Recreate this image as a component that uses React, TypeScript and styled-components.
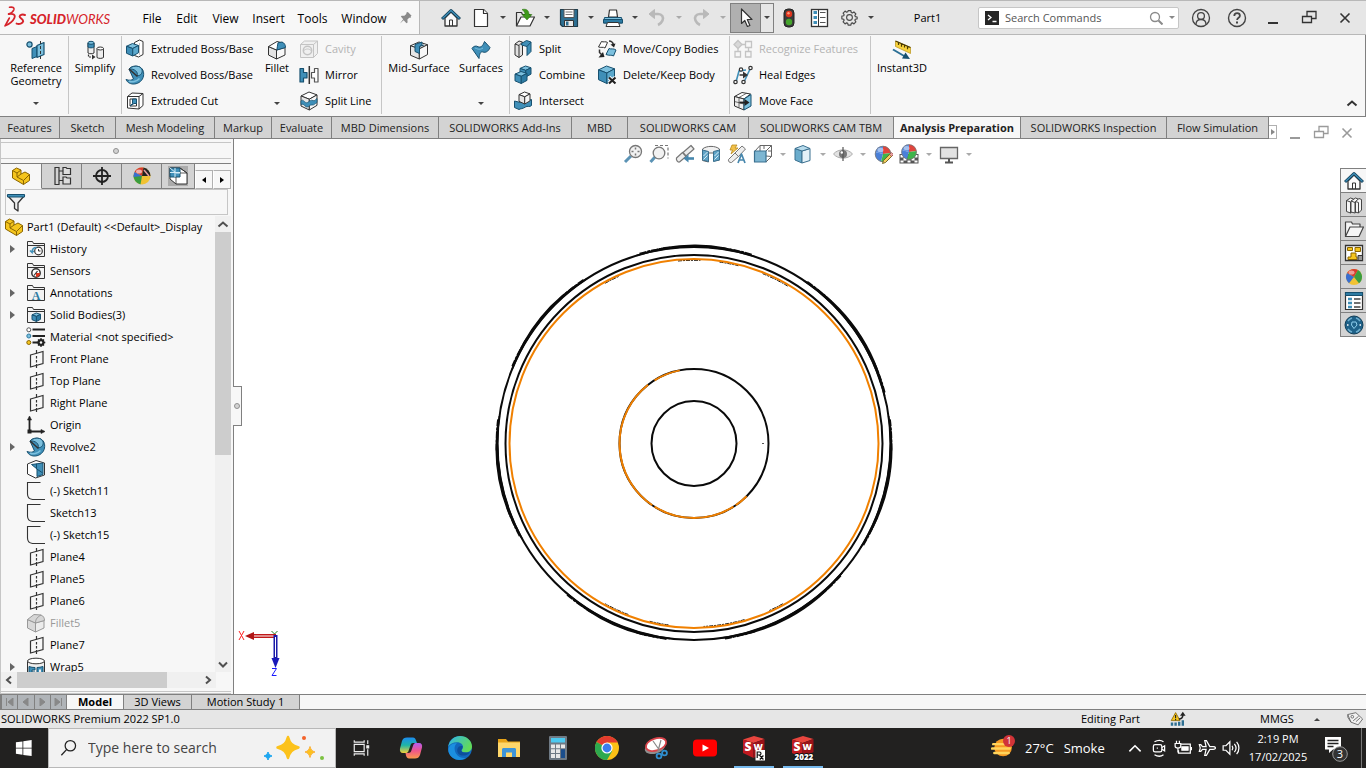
import React from "react";
import styled, { createGlobalStyle, css } from "styled-components";

const FONT = '"Open Sans", "Noto Sans", sans-serif';
const BLUE = "#3f8fb8";
const LIGHT = "#7cc0de";
const NAVY = "#17506f";
const INK = "#333333";
const GREY = "#c4c4c4";

const GlobalStyle = createGlobalStyle`
  *, *::before, *::after { box-sizing: border-box; }
  body { margin: 0; background: #f7f7f7; overflow: hidden; }
  button, input { font: inherit; color: inherit; margin: 0; }
  button { padding: 0; border: 0; background: none; cursor: default; white-space: nowrap; }
  ul { margin: 0; padding: 0; list-style: none; }
  svg { display: block; flex: none; }
`;

/* ------------------------------------------------------------------ */
/* Drawings                                                            */
/* ------------------------------------------------------------------ */

type CubeProps = {
  x: number;
  y: number;
  w: number;
  h: number;
  top?: string;
  left?: string;
  right?: string;
  line?: string;
};

const Cube = ({ x, y, w, h, top = "#fff", left = "#e6e6e6", right = "#f7f7f7", line = INK }: CubeProps) => {
  const p = (fx: number, fy: number) => `${x + w * fx},${y + h * fy}`;
  return (
    <g stroke={line} strokeWidth="1" strokeLinejoin="round">
      <polygon fill={top} points={[p(0, 0.22), p(0.5, 0), p(1, 0.16), p(0.52, 0.4)].join(" ")} />
      <polygon fill={left} points={[p(0, 0.22), p(0.52, 0.4), p(0.52, 1), p(0, 0.78)].join(" ")} />
      <polygon fill={right} points={[p(0.52, 0.4), p(1, 0.16), p(1, 0.74), p(0.52, 1)].join(" ")} />
    </g>
  );
};

const Ball = () => (
  <g>
    <path d="M10 10V2a8 8 0 0 0-7.700 6z" fill="#5b8ee0" />
    <path d="M10 10 2.300 8A8 8 0 0 0 8 17.700z" fill="#4a80d8" />
    <path d="M10 10V2a8 8 0 0 1 8 7z" fill="#e0443c" />
    <path d="M10 10l8-1a8 8 0 0 1-10 8.700z" fill="#3db54a" />
    <circle cx="10" cy="10" r="7.800" fill="none" stroke="#777" strokeWidth=".8" />
    <ellipse cx="7.500" cy="6" rx="3" ry="2.200" fill="#fff" opacity=".45" />
  </g>
);

const Folder = ({ children }: { children?: React.ReactNode }) => (
  <g>
    <path d="M1.500 17.500V2.500h5l1 2h11v13z" fill="#f2f2f2" stroke={INK} />
    <path d="M1.500 6.500h17" stroke={INK} />
    {children}
  </g>
);

const Revolve = () => (
  <g strokeLinejoin="round">
    <path
      d="M4 4C6 1.500 10 .500 13.500 1.500c4 1.200 5.800 5 5 9.500-.8 4.500-4.500 7.500-9 8-3.500.3-7-1-8.500-4.500 3 1.200 6 .8 7.500-.5z"
      fill={BLUE}
      stroke={NAVY}
    />
    <path d="M4 4c2-2.500 6.500-3.500 9.500-2.500 3.500 1.200 4.500 4.500 3 7-1 1.800-3 2.500-4.500 2C13.500 7 9.500 3.500 4 4z" fill={LIGHT} stroke={NAVY} />
    <path d="M4 4l8.500 7.500" stroke={INK} strokeWidth="1.600" />
    <path d="M4 16c3 1.500 7.500.8 10.500-2.500" stroke={LIGHT} fill="none" strokeWidth="1.500" />
  </g>
);

const art: Record<string, React.ReactNode> = {
  ds: (
    <g fill="none" stroke="#d6232a" strokeLinecap="round" strokeLinejoin="round">
      <path d="M5 1.200c3-.6 4.600.4 4 2.200-.6 1.600-2.500 3-4.800 3.900" strokeWidth="1.400" />
      <path d="M4.200 7.300c4.300-.8 6.600.7 5.200 3.700C8 14 4.800 16.400 1 18l3.800-7" strokeWidth="1.600" />
      <path d="M19 8.200c-1.900-.8-4.700-.3-4.800 1.300-.1 1.500 3.500 2.400 3.200 4.500-.3 1.900-3.400 2.700-5.900 2" strokeWidth="1.800" />
    </g>
  ),
  pin: (
    <path d="M9.500 1l4 4-1 .5.500 1.500-2 .2-2 2 .2 3-1.200.8-3-3L1 13.500l3.500-4.700L2 6l.8-1 3 .2 2-2 .2-1.700z" fill="#8a8a8a" />
  ),
  home: (
    <g strokeLinejoin="round">
      <path d="M4 10v8h12v-8l-6-6z" fill="#fafafa" stroke={INK} strokeWidth="1.300" />
      <path d="M8.500 18v-6h3v6" fill="none" stroke={INK} />
      <path d="M1 11L10 2.500 19 11" fill="none" stroke="#123f58" strokeWidth="3" />
      <path d="M1.500 10.500L10 2.500l8.500 8" fill="none" stroke={BLUE} strokeWidth="1.200" />
    </g>
  ),
  page: (
    <g fill="#fff" stroke={INK} strokeWidth="1.200" strokeLinejoin="round">
      <path d="M3.500 1.500h9l4 4v13h-13z" />
      <path d="M12.500 1.500v4h4" />
    </g>
  ),
  open: (
    <g strokeLinejoin="round">
      <path d="M1.500 18V4.500h5l1 2h7.500V9" fill="#e8e8e8" stroke={INK} strokeWidth="1.200" />
      <path d="M1.500 18L6 9h13.500L15 18z" fill="#fff" stroke={INK} strokeWidth="1.200" />
      <path d="M7 1.500c4-1 7 .5 7 5h3l-5 5.500-5-5.500h3c0-2-1-3.500-3-5z" fill="#3f9a1c" stroke="#2a6e10" strokeWidth=".5" />
    </g>
  ),
  save: (
    <g strokeLinejoin="round">
      <path d="M1.500 1.500h17v17h-15l-2-2z" fill="#2d6f92" stroke="#1f3d4c" strokeWidth="1.200" />
      <path d="M5 1.500h10v8H5z" fill="#fff" stroke="#555" />
      <path d="M6.500 4h7M6.500 6.500h7" stroke="#777" />
      <path d="M5.500 12.500h9v6h-9z" fill="#e9e9e9" stroke="#333" />
      <path d="M7 13.500h2.500v4H7z" fill="#2d6f92" />
    </g>
  ),
  print: (
    <g strokeLinejoin="round">
      <path d="M5.500 9l1-7h7l1 7z" fill="#fff" stroke={INK} strokeWidth="1.200" />
      <path d="M1.500 9.500h17l1 5.500H.5z" fill={LIGHT} stroke={NAVY} />
      <path d="M.5 11.500h19v3.500H.500z" fill="#2d7ba3" stroke={NAVY} />
      <path d="M4.500 14.500h11l1.500 4H3z" fill="#fff" stroke={INK} />
    </g>
  ),
  undo: (
    <g fill="none" stroke="#b9b9b9">
      <path d="M5 6h6c4 0 6 3 4.500 6.500-.8 2-2.500 3.500-4.500 4.500" strokeWidth="2.600" />
      <path d="M7.500 1.500L2 6l5.500 4.500z" fill="#b9b9b9" strokeWidth="1" />
    </g>
  ),
  redo: (
    <g fill="none" stroke="#b9b9b9">
      <path d="M15 6H9C5 6 3 9 4.500 12.500c.8 2 2.500 3.500 4.500 4.500" strokeWidth="2.600" />
      <path d="M12.500 1.500L18 6l-5.500 4.500z" fill="#b9b9b9" strokeWidth="1" />
    </g>
  ),
  cursor: <path d="M5.500 1v14.500l3.300-3 2.600 6 2.500-1-2.600-6H16z" fill="#fff" stroke="#333" strokeWidth="1.200" strokeLinejoin="round" />,
  traffic: (
    <g>
      <rect x="5" y="1" width="10" height="18" rx="4" fill="#3a3a3a" stroke="#222" />
      <circle cx="10" cy="6" r="3.200" fill="#e0361e" />
      <circle cx="10" cy="14" r="3.200" fill="#45a52c" />
      <circle cx="9.500" cy="5.200" r="1.200" fill="#ff9a80" />
    </g>
  ),
  list: (
    <g>
      <rect x="2.500" y="1.500" width="16" height="17" fill="#fff" stroke={INK} strokeWidth="1.300" />
      <path d="M9.500 1.500v17" stroke={INK} />
      <path d="M4.500 4.500h3.500M4.500 9.500h3.500M4.500 14.500h3.500" stroke={BLUE} strokeWidth="3" />
      <path d="M11 4.500h5.500M11 9.500h5.500M11 14.500h5.500" stroke="#555" />
    </g>
  ),
  gear: (
    <g fill="none" stroke="#4a4a4a">
      <path
        d="M8.400 2h3.200l.5 2.200 1.200.5 1.900-1.200 2.300 2.300-1.200 1.900.5 1.200 2.200.5v1.200l0 1-2.200.500-.5 1.200 1.200 1.900-2.300 2.300-1.900-1.200-1.200.5-.5 2.200H8.400l-.5-2.200-1.200-.5-1.900 1.200-2.300-2.300 1.200-1.900-.5-1.200L1 11.600V8.400l2.200-.5.5-1.200-1.200-1.900 2.300-2.300 1.900 1.200 1.200-.5z"
        strokeWidth="1.400"
        strokeLinejoin="round"
      />
      <circle cx="10" cy="10" r="3.400" strokeWidth="1.300" />
    </g>
  ),
  prompt: (
    <g>
      <rect width="14" height="14" fill="#262626" />
      <path d="M3 4l3 2.500L3 9M7.500 10.500h4" fill="none" stroke="#fff" strokeWidth="1.300" />
    </g>
  ),
  lens: (
    <g fill="none" stroke="#8a8a8a" strokeWidth="1.300">
      <circle cx="6" cy="6" r="4.500" />
      <path d="M9.500 9.500l4 4" strokeWidth="2" />
    </g>
  ),
  user: (
    <g fill="none" stroke="#444" strokeWidth="1.300">
      <circle cx="10" cy="10" r="8.500" />
      <circle cx="10" cy="8" r="3.400" />
      <path d="M5 16.500c0-3 2-5 5-5s5 2 5 5" />
    </g>
  ),
  help: (
    <g fill="none" stroke="#444">
      <circle cx="10" cy="10" r="8.500" strokeWidth="1.400" />
      <path d="M7.300 8c0-1.800 1.200-2.800 2.800-2.800s2.800 1 2.800 2.500c0 2-2.800 2.200-2.800 4.300" strokeWidth="1.800" />
      <path d="M10 13.500v2" strokeWidth="2" />
    </g>
  ),
  min: <path d="M3 13h10" stroke="currentColor" strokeWidth="2" />,
  restore: (
    <g fill="none" stroke="currentColor" strokeWidth="1.300">
      <path d="M1.500 6.500h9v6h-9z" />
      <path d="M6 6.500v-5h9v7h-4.500" />
    </g>
  ),
  close: <path d="M3.500 3.500l9 9M12.500 3.500l-9 9" stroke="currentColor" strokeWidth="1.600" />,
  chevronUp: <path d="M3.500 10.500L8 6.500l4.500 4" fill="none" stroke="currentColor" strokeWidth="2" />,
  chevronDown: <path d="M4 6.500l4 4 4-4" fill="none" stroke="currentColor" strokeWidth="2" />,
  chevronLeft: <path d="M10 4.500L6 8l4 3.500" fill="none" stroke="currentColor" strokeWidth="2" />,
  chevronRight: <path d="M6 4.500L10 8l-4 3.500" fill="none" stroke="currentColor" strokeWidth="2" />,

  refgeo: (
    <g strokeLinejoin="round">
      <circle cx="3.500" cy="4.500" r="2.600" fill={LIGHT} stroke={NAVY} strokeWidth="1.200" />
      <path d="M6 8.500l5-2v10l-5 2z" fill={BLUE} stroke={NAVY} />
      <path d="M11 5.500L18 2.500v12l-7 3z" fill={LIGHT} stroke={NAVY} strokeWidth="1.200" />
      <path d="M14.500 1v18" stroke={INK} strokeDasharray="3 2" />
    </g>
  ),
  simplify: (
    <g>
      <path d="M3 3v10c1.500 1 4.500 1 6 0V3" fill="#eee" stroke={INK} />
      <path d="M3 3v4c1.500 1.200 4.500 1.200 6 0V3z" fill={BLUE} stroke={NAVY} />
      <ellipse cx="6" cy="2.800" rx="3" ry="1.500" fill={LIGHT} stroke={NAVY} />
      <path d="M12 8.500v9c1.500 1.200 5 1.200 6.500 0v-9z" fill="#eee" stroke={INK} />
      <ellipse cx="15.250" cy="8.500" rx="3.250" ry="1.500" fill="#fff" stroke={INK} />
      <path d="M3.500 14.500v2.500h3" fill="none" stroke={INK} strokeWidth="1.200" strokeDasharray="2 1" />
      <path d="M7 14.500l3.500 2.500L7 19.500z" fill={INK} />
    </g>
  ),
  extrude: (
    <g strokeLinejoin="round">
      <path d="M9.500 3.500l5-2.500 3.500 1.500v13l-4.500 2.500-4-1.500z" fill="#fff" stroke={INK} />
      <path d="M14.500 4v12" stroke={GREY} />
      <Cube x={1.500} y={4.500} w={12} h={12.500} top={LIGHT} left={BLUE} right="#5ba8cc" line={NAVY} />
    </g>
  ),
  revolve: <Revolve />,
  cut: (
    <g strokeLinejoin="round">
      <path d="M2.500 5.500L7 2l11 .5v12L14 18 2.500 17z" fill="#fff" stroke={INK} />
      <path d="M2.500 5.500H14V18M14 5.500l4-3" fill="none" stroke={INK} />
      <path d="M5 8h6.500v7H5z" fill="#fff" stroke={INK} />
      <path d="M7.500 8h4v4.500H9L5 15l2.500-2.500z" fill={BLUE} stroke={NAVY} />
    </g>
  ),
  fillet: (
    <g strokeLinejoin="round">
      <path d="M1.500 6.500L9.500 10v9l-8-4z" fill="#e3e3e3" stroke={INK} />
      <path d="M9.500 10L18 7.500V15l-8.500 4z" fill="#f8f8f8" stroke={INK} />
      <path d="M1.500 6.500L10 1.500l6 1.500-4 3-2.500 4z" fill="#fff" stroke={INK} />
      <path d="M11 2.800L15 2c2.500 1 3.500 3 3.500 5.500L10 10c0-2 .5-4 1-7.200z" fill={BLUE} stroke={NAVY} />
    </g>
  ),
  filletOff: (
    <g strokeLinejoin="round">
      <path d="M1.500 6.500L9.500 10v9l-8-4z" fill="#d9d9d9" stroke="#999" />
      <path d="M9.500 10L18 7.500V15l-8.500 4z" fill="#ececec" stroke="#999" />
      <path d="M1.500 6.500L8 1.500 15 2c2.500 1 3.500 3 3.500 5.500L9.500 10z" fill="#d6d6d6" stroke="#999" />
      <path d="M9.500 10c0-3 1-5.500 5.500-8" fill="none" stroke="#999" />
    </g>
  ),
  cavity: (
    <g fill="none" stroke={GREY} strokeLinejoin="round">
      <path d="M1.500 5.500L5.500 2H18.500v12.500l-4 4h-13z" fill="#f0f0f0" />
      <path d="M1.500 5.500h13v13M14.500 5.500l4-3.500" />
      <circle cx="8.500" cy="11.500" r="4.200" strokeWidth="1.500" />
      <path d="M5 11.500c2-2 5-2 7 0" />
    </g>
  ),
  mirror: (
    <g strokeLinejoin="round">
      <path d="M1 3.500h3.500v4H8v5.500H4.500v4H1z" fill={BLUE} stroke={NAVY} strokeWidth="1.200" />
      <path d="M19 3.500h-3.500v4H12.500v5.500h3v4H19z" fill="#fff" stroke="#555" strokeWidth="1.200" />
      <path d="M10.300 1v18" stroke={INK} strokeWidth="1.500" />
    </g>
  ),
  splitLine: (
    <g>
      <Cube x={2} y={1} w={16} h={18} />
      <path d="M2 10c2-3 4 3 6.500 1.500S12 8.500 14 9.500s2-1 4-2v4c-2 1-3 3-5 2.500s-3 2-5 2-3-4-6-2.500z" fill={BLUE} stroke={NAVY} strokeWidth=".7" />
    </g>
  ),
  midSurface: (
    <g strokeLinejoin="round">
      <Cube x={1.500} y={2} w={17} h={17} />
      <path d="M6 4.500l7-2.500v3L10.500 6.500v7L6 11.500z" fill={BLUE} stroke={NAVY} />
      <path d="M10.500 6.500L15 5" stroke={NAVY} />
    </g>
  ),
  surfaces: (
    <g strokeLinejoin="round">
      <path d="M1 8.500c1.500-2.500 4-3 6-1.800C9.500 8 12 6 13.500 1.500l5.500 6c-1.500 4-4.500 5.500-7 4.500s-3.500 2-4 6.500z" fill={BLUE} stroke={NAVY} />
      <path d="M4 8c2 .5 4 2.500 8 0" fill="none" stroke={LIGHT} />
    </g>
  ),
  split: (
    <g strokeLinejoin="round">
      <path d="M2 5l4-3 3.500 1v13L6 18.500 2 16z" fill="#e2e2e2" stroke={INK} />
      <path d="M2 5l4 1.500v12M6 6.500L9.500 3" fill="none" stroke={INK} />
      <path d="M8.500 4.500l5-3L18 3v9.500l-4 4V7.500L8.500 6z" fill={BLUE} stroke={NAVY} />
      <path d="M14 7.500L18 3" stroke={NAVY} />
    </g>
  ),
  combine: (
    <g>
      <Cube x={7} y={1} w={11} h={11} top={LIGHT} left={BLUE} right="#2d7ba3" line={NAVY} />
      <Cube x={2} y={6.500} w={12} h={12} top={LIGHT} left={BLUE} right="#2d7ba3" line={NAVY} />
    </g>
  ),
  intersect: (
    <g strokeLinejoin="round">
      <path d="M1.500 10l6 1.500 11-3v6c-2 2-4 0-6 1.500-3 2-5 1.500-6.500 2.500l-4.500-2z" fill={BLUE} stroke={NAVY} />
      <Cube x={6} y={1} w={11} h={12} />
    </g>
  ),
  moveCopy: (
    <g strokeLinejoin="round">
      <path d="M1.500 8L4.500 2.500c2 1 4-.5 6 1L8 9c-2-1.500-4 0-6.500-1z" fill="#fff" stroke={INK} />
      <path d="M9 15.500l3-6c2 1 4.500-.5 7 1.500l-2.500 6c-2-1.500-4 0-7.500-1.500z" fill={LIGHT} stroke={NAVY} />
      <path d="M12 2c2.500 0 4 1.500 4.500 4" fill="none" stroke={INK} strokeWidth="1.500" />
      <path d="M13.500 5.500l3.500 3 1.500-4z" fill="#222" />
      <path d="M2.500 10.500v3l2 2" fill="none" stroke={INK} strokeWidth="1.500" />
      <path d="M1.500 18.500l6-.5-1.500-5z" fill="#222" />
    </g>
  ),
  deleteBody: (
    <g>
      <Cube x={1.500} y={1} w={16} h={17.500} top={LIGHT} left={BLUE} right="#5ba8cc" line={NAVY} />
      <path d="M12 12.500l6.500 6M18.500 12.500l-6.500 6" stroke="#fff" strokeWidth="4" />
      <path d="M12 12.500l6.500 6M18.500 12.500l-6.500 6" stroke="#222" strokeWidth="2.200" />
    </g>
  ),
  recognize: (
    <g fill="none" stroke={GREY} strokeWidth="1.300">
      <path d="M5 1.500L9 5.500 5 9.500 1 5.500z" fill="#d8d8d8" />
      <path d="M12.500 2.500h6v6h-6zM2 12.500h5.500V18H2zM12.500 12.500h5.500V18h-5.500z" />
      <path d="M9 5.500h3.500M5 9.500v3M15.500 8.500v4" />
    </g>
  ),
  heal: (
    <g fill="none">
      <path d="M3 17L6 6l7-1" stroke={BLUE} strokeWidth="1.600" />
      <path d="M11 17L17.500 3" stroke={BLUE} strokeWidth="1.600" />
      <path d="M6.500 10h5" stroke={INK} strokeWidth="1.500" />
      <path d="M10 6.500l5 3.500-5 3.500z" fill={INK} />
      <g fill="#fff" stroke={INK} strokeWidth="1.200">
        <circle cx="2.500" cy="17" r="1.700" />
        <circle cx="10.500" cy="17" r="1.700" />
        <circle cx="17.500" cy="3" r="1.700" />
        <circle cx="8" cy="4.500" r="1.700" />
      </g>
    </g>
  ),
  moveFace: (
    <g strokeLinejoin="round">
      <path d="M1.500 5.500L9 1.500l8.500 1.500-6.500 5z" fill="#fff" stroke={INK} />
      <path d="M1.500 5.500L11 8v11l-9.500-4z" fill="#eee" stroke={INK} />
      <path d="M6 6.500v10M1.500 10.500L11 13M6 6.500L13.500 2.300" fill="none" stroke={INK} strokeWidth=".7" />
      <path d="M11 8l7-4.500v11.500l-7 4z" fill={LIGHT} stroke={NAVY} />
      <path d="M6.500 11.500h6" stroke="#222" strokeWidth="1.800" />
      <path d="M11.500 8l5 3.500-5 3.500z" fill="#222" />
    </g>
  ),
  instant: (
    <g strokeLinejoin="round">
      <path d="M3.500 1L18.500 7.500v6L3.500 6.500z" fill="#f8d23c" stroke="#b8921a" strokeWidth=".7" />
      <path d="M3.500 1L18.500 7.500M6.500 2.500v2.500M9.500 3.700v3M12.500 5v2.500M15.500 6.300v3" stroke="#4a3a00" strokeWidth="1.200" />
      <path d="M1 9.500L13 16.500" stroke="#2b6f95" strokeWidth="2" />
      <path d="M13.500 12.500l4.500 6.500-8-.5z" fill={NAVY} />
    </g>
  ),

  part: (
    <g stroke="#8a6500" strokeLinejoin="round">
      <path d="M1.500 4.500L5.500 2l4.500 2v4l4-2 4.500 2.500v6L12.500 18.500 1.500 12z" fill="#f5c51d" />
      <path d="M1.500 4.500L6 7l4-3M6 7v4l6.500 3.500 6-6M12.500 14.500v4M6 11l4-3" fill="none" />
    </g>
  ),
  tree: (
    <g fill="none" stroke={INK} strokeWidth="1.200">
      <path d="M3 1.500h4v17H3zM7 5h4M7 14.500h4" />
      <path d="M11 3.500V1.500h3l1 1h3.500v6H11zM11 12.500v-1.500h3l1 1h3.500v6H11z" fill="#ddd" />
    </g>
  ),
  target: (
    <g fill="none" stroke="#222" strokeWidth="1.800">
      <circle cx="10" cy="10" r="6" />
      <path d="M10 1v18M1 10h18" />
    </g>
  ),
  appearance: (
    <g>
      <circle cx="10" cy="10" r="8.500" fill="#f1c232" />
      <path d="M10 10L2.500 6a8.500 8.500 0 0 1 9-4.400z" fill="#d73b2f" />
      <path d="M10 10l1.500-8.400a8.500 8.500 0 0 1 7 8.400z" fill="#222" />
      <path d="M12 4l5 6" stroke="#e8a0a0" strokeWidth="1.500" />
      <path d="M10 10L1.600 9A8.500 8.500 0 0 0 8.500 18.400z" fill="#3a9d3f" />
      <path d="M10 10L2.500 6a8.500 8.500 0 0 0-1 5z" fill="#3a6ed0" />
      <ellipse cx="7" cy="5.500" rx="3" ry="2" fill="#fff" opacity=".6" />
    </g>
  ),
  camBox: (
    <g strokeLinejoin="round">
      <rect width="20" height="20" fill="#ababab" />
      <path d="M2 2h10l7 5v11H8l-6-5z" fill="#fff" stroke={INK} />
      <path d="M2 2h10v9H2z" fill={BLUE} stroke={NAVY} />
      <path d="M7 2v9M2 6.500h10M2 2l6 5h4" fill="none" stroke="#d5ecf7" />
      <path d="M8 11v7M12 7h7M12 2l7 5" fill="none" stroke={INK} strokeWidth=".8" />
    </g>
  ),
  filter: (
    <g strokeLinejoin="round">
      <path d="M1.500 3.500h17L12 11v8l-3.500-2.500V11z" fill="#eee" stroke={INK} strokeWidth="1.300" />
      <path d="M1.500 2.500h17v2.500h-17z" fill={BLUE} stroke={NAVY} />
    </g>
  ),
  history: (
    <Folder>
      <circle cx="12.500" cy="12" r="3.800" fill="#fff" stroke={INK} strokeWidth="1.200" />
      <path d="M12.500 10v2h2" stroke={INK} fill="none" />
      <path d="M10.500 8.500c-3 0-4.500 2-4.500 5l-2-2M6 13.500l2-1.500" stroke={BLUE} fill="none" strokeWidth="1.500" />
    </Folder>
  ),
  sensors: (
    <Folder>
      <circle cx="10" cy="12" r="4.200" fill="#fff" stroke={INK} strokeWidth="1.500" />
      <path d="M10 12h4a4 4 0 0 1-4 4z" fill="#e0361e" />
      <path d="M8 14.500l3.500-4.500" stroke={INK} strokeWidth="1.200" />
    </Folder>
  ),
  annotations: (
    <Folder>
      <text x="10" y="16.500" textAnchor="middle" fontFamily="Liberation Serif" fontWeight="700" fontSize="12" fill="#2d7ba3">
        A
      </text>
    </Folder>
  ),
  bodies: (
    <Folder>
      <Cube x={6} y={8} w={8.500} h={8.500} top={LIGHT} left={BLUE} right="#2d7ba3" line={NAVY} />
    </Folder>
  ),
  material: (
    <g>
      <path d="M6.500 2.500H19M6.500 9H19M6.500 15.500h6" stroke="#222" strokeWidth="1.800" />
      <circle cx="2.800" cy="2.800" r="2" fill="#fff" stroke="#555" />
      <circle cx="2.800" cy="9" r="2" fill={LIGHT} stroke="#2d7ba3" />
      <circle cx="2.800" cy="15.500" r="2" fill="#f5c51d" stroke="#8a6500" />
      <circle cx="15" cy="15.500" r="2.400" fill="none" stroke="#222" strokeWidth="2.200" />
      <path d="M15 11v9M10.700 15.500h8.600M12 12.500l6 6M18 12.500l-6 6" stroke="#222" strokeWidth="1.300" />
      <circle cx="15" cy="15.500" r="1.200" fill="#f7f7f7" />
    </g>
  ),
  plane: (
    <g fill="none" stroke={INK} strokeWidth="1.200">
      <path d="M4.500 6L17 2.500v12L4.500 18z" />
      <path d="M10.500 1v3.500M10.500 7v2.500M10.500 11v2.500M10.500 15v4" />
    </g>
  ),
  origin: (
    <g fill="#222" stroke="#222">
      <path d="M3.500 4v12.500h12" fill="none" strokeWidth="1.800" />
      <path d="M1.500 5l2-4 2 4zM15 14.500l4 2-4 2z" strokeWidth=".6" />
      <rect x="2" y="15" width="3" height="3" />
    </g>
  ),
  shell: (
    <g strokeLinejoin="round">
      <path d="M1.500 5L10 1.500 18.500 4v12L9.500 19l-8-4z" fill="#fff" stroke={INK} />
      <path d="M5.500 5.500L17 4v11.500l-6 2V10z" fill={BLUE} stroke={NAVY} />
      <path d="M10.500 4.800v5l6 4" fill="none" stroke={NAVY} />
    </g>
  ),
  sketch: <path d="M14.500 1.500h-13v11.500c0 3.500 1.500 5 5 5.500H19" fill="none" stroke={INK} strokeWidth="1.100" />,
  wrap: (
    <g>
      <path d="M1.500 4.500V18h17V4.500" fill="#eee" stroke={INK} />
      <ellipse cx="10" cy="4" rx="8.500" ry="2.800" fill="#fff" stroke={INK} />
      <path d="M3 9.500c2 .8 4 1 6 1v2.500H6v2h3V19c-2 0-4 0-6-.5zM11 10.500c2 0 4-.4 6-1v9c-2 .5-4 .5-6 .5z" fill={BLUE} stroke={NAVY} />
      <path d="M13 12.500h2v4h-2z" fill="#eee" />
    </g>
  ),

  zoomFit: (
    <g fill="none" stroke="#777">
      <path d="M8 12l-6 6" stroke="#5b93b5" strokeWidth="3" />
      <circle cx="12.500" cy="7.500" r="6" fill="#f2f2f2" strokeWidth="1.300" />
      <path d="M12.500 3.500v2M12.500 9.500v2M8.500 7.500h2M14.500 7.500h2" strokeWidth="1.500" />
    </g>
  ),
  zoomArea: (
    <g fill="none" stroke="#777">
      <path d="M6 1.500h13v13" strokeDasharray="3 2" strokeWidth="1.200" />
      <path d="M6 13l-4.500 5" stroke="#5b93b5" strokeWidth="3" />
      <circle cx="10" cy="9" r="5.800" fill="#f2f2f2" strokeWidth="1.300" />
    </g>
  ),
  prevView: (
    <g strokeLinejoin="round">
      <path d="M1.500 14l6-5.500 3.500 4-6.500 5.500c-2 .5-3.500-2-3-4zM8 8.500l8-7 3 3.500-8 7z" fill="#eee" stroke="#777" strokeWidth="1.200" />
      <path d="M12 14.500h7" stroke="#4787ad" strokeWidth="2.600" />
      <path d="M13.500 10.500v8l-5-4z" fill="#4787ad" />
    </g>
  ),
  section: (
    <g strokeLinejoin="round">
      <path d="M1.500 5c4-3.500 13-3.500 17 0v11l-6 1V9h-5v9l-6-1.500z" fill="#f0f0f0" stroke="#666" />
      <path d="M1.500 6l6 1.500v10l-6-1.500zM12.500 7.500l6-1.500v10l-6 1.500z" fill="#5fa3c6" stroke="#3b708f" />
      <path d="M2.500 12l4-4M2.500 15.500l4-4M13.500 12l4-4M13.500 15.500l4-4" stroke="#d8edf7" />
    </g>
  ),
  dynamic: (
    <g strokeLinejoin="round">
      <path d="M1.500 15.500L8 9l3.500 3.500-7 6c-2 .3-3.500-1-3-3zM8 9l7-7 3.500 3-7 7.500z" fill="#eee" stroke="#777" />
      <path d="M5 1h5L8 4h3l-7 6 1.500-4H3z" fill="#f2c14a" stroke="#b98a1c" strokeWidth=".8" />
      <path d="M11 19l3.500-9 3.500 9M12.500 16h4" fill="none" stroke="#4787ad" strokeWidth="1.700" />
    </g>
  ),
  viewOrient: (
    <g strokeLinejoin="round" stroke="#666">
      <path d="M2 7L7 1.500h11.500v11L13 18z" fill="#fff" />
      <path d="M13 7l5.500-5.500M7 1.500V7M11 1.500V5M18.500 7H15M18.500 12.500L13 12" fill="none" />
      <path d="M1.500 7H13v11H1.500z" fill="#7db6d2" stroke="#3b708f" strokeWidth="1.200" />
    </g>
  ),
  displayStyle: (
    <g strokeLinejoin="round" stroke="#3b708f">
      <path d="M2 4.500L9 7v12l-7-3z" fill="#6aaccc" />
      <path d="M9 7l8-2.500v12L9 19z" fill="#e4f2f9" />
      <path d="M2 4.500L10 1.500l7 3L9 7z" fill="#b7dbec" />
    </g>
  ),
  eye: (
    <g>
      <path d="M.5 10C5 4.500 15 4.500 19.500 10 15 15.500 5 15.500.500 10z" fill="#e2e2e2" stroke="#aaa" />
      <circle cx="10" cy="10" r="4" fill="#777" />
      <path d="M10 3v14" stroke="#555" strokeWidth="1.200" />
      <circle cx="8.800" cy="8.500" r="1.200" fill="#fff" />
    </g>
  ),
  ballEdit: (
    <g>
      <Ball />
      <path d="M17.500 9.500l2 2-7 7-3 1 1-3z" fill="#f3cf5e" stroke="#6b5a20" strokeWidth=".9" />
      <path d="M16.500 10.500l2-2 2 2-2 2z" fill="#e9a0a0" stroke="#8a4040" strokeWidth=".6" />
    </g>
  ),
  scene: (
    <g>
      <path d="M.5 10h19v9.500H.500z" fill="#555" />
      <path d="M1.500 11h3v2.500h-3zM15.500 11h3v2.500h-3zM4.500 14h3v2.500h-3zM12.500 14h3v2.500h-3zM1.500 16.500h3v2h-3zM8.500 16.500h3v2h-3zM15.500 16.500h3v2h-3z" fill="#fff" />
      <g transform="translate(.5 -1.500) scale(.95)">
        <Ball />
      </g>
    </g>
  ),
  monitor: (
    <g>
      <path d="M1.500 3.500h17v11h-17z" fill="#e2e2e2" stroke="#666" strokeWidth="1.300" />
      <path d="M10 15v2.500M6 18.500h8" stroke="#555" strokeWidth="2" />
    </g>
  ),

  library: (
    <g fill="#f5f5f5" stroke="#444" strokeLinejoin="round">
      <path d="M2.500 5.500l4-2.500 3 1v11.500l-3 2.500-4-1.500z" />
      <path d="M7 6l4.500-3 2.500 1v11.500l-3 2.500-4-1z" />
      <path d="M11.500 6.500L15 3.500l2.500 1V15l-3 3-3-1z" />
      <path d="M2.500 5.500l4 1.500v11M7 6l4 1.500V18M11.500 6.500l3 1V18" fill="none" />
    </g>
  ),
  folderOpen: (
    <g fill="#f5f5f5" stroke="#444" strokeWidth="1.200" strokeLinejoin="round">
      <path d="M1.500 17.500V3h6l1 2h7.500v3" />
      <path d="M1.500 17.500L6 8h13.500l-4.500 9.500z" />
    </g>
  ),
  palette: (
    <g>
      <path d="M1.500 2.500h17v15h-17z" fill="#fff" stroke={INK} strokeWidth="1.300" />
      <path d="M3.500 4.500h5v3h-5zM11 4.500h5.500v4H11zM4 14h3v-4h5v4h1v2.500H4z" fill="#f5c51d" stroke="#8a6500" />
      <path d="M14 12.500h4.500v5H14z" fill="#999" stroke={INK} />
    </g>
  ),
  ball: (
    <g>
      <circle cx="10" cy="10" r="8" fill="#f1c232" />
      <path d="M10 10L3 6a8 8 0 0 1 11-3z" fill="#d73b2f" />
      <path d="M10 10l4-7a8 8 0 0 1 1 13.200z" fill="#3a9d3f" />
      <path d="M10 10L3 6a8 8 0 0 0 2 10.200z" fill="#3a6ed0" />
      <ellipse cx="7.500" cy="5.500" rx="3" ry="2" fill="#fff" opacity=".5" />
    </g>
  ),
  props: (
    <g>
      <path d="M1.500 1.500h17v17h-17z" fill="#fff" stroke={INK} strokeWidth="1.200" />
      <path d="M1.500 1.500h17v3h-17z" fill="#2d7ba3" stroke={NAVY} />
      <path d="M4 8h4M4 12h4M4 16h4" stroke={BLUE} strokeWidth="2.400" />
      <path d="M10 8h6.500M10 12h6.500M10 16h6.500" stroke="#444" strokeWidth="1.300" />
    </g>
  ),
  globe: (
    <g>
      <circle cx="10" cy="10" r="9" fill="#1e6188" stroke="#123f58" />
      <path d="M4 6a7 7 0 0 1 4-3M12 3a7 7 0 0 1 4 3M4 14a7 7 0 0 0 4 3M12 17a7 7 0 0 0 4-3" fill="none" stroke="#6fb0d0" strokeWidth="1.500" />
      <path d="M8 7h4l1 3-3 3.500L7.500 10z" fill="none" stroke="#8fd0ee" />
      <path d="M3 10h1.500M15.500 10H17" stroke="#fff" strokeWidth="1.500" />
    </g>
  ),

  rebuild: (
    <g>
      <path d="M7 2l5.500 10H1.500z" fill="#f5c51d" stroke="#8a6500" strokeLinejoin="round" />
      <path d="M7 5v4M7 10v1.500" stroke="#222" strokeWidth="1.400" />
      <path d="M11 10c4 0 5-2 5-5" fill="none" stroke="#222" strokeWidth="2" />
      <path d="M12.500 6L16 1l3.500 5z" fill="#222" />
      <path d="M1 14.500h3v4H1zM5.500 14.500h3v4h-3zM10 13.500h3v5h-3zM14.500 11.500h3v7h-3z" fill="#2d6f92" />
    </g>
  ),
  tags: (
    <g fill="#f2f2f2" stroke="#666" strokeLinejoin="round">
      <path d="M2 5l9-2 7.500 7-5 6.500-8-3z" />
      <path d="M2 5v3l3.500 5.500" fill="none" />
      <circle cx="7" cy="7.500" r="1.500" />
      <path d="M8 12l6-5M11 13l4.500-4" />
    </g>
  ),

  windows: <path d="M1 3.700l7.300-1v7H1zM9.200 2.500L18.500 1v8.700H9.200zM1 10.500h7.300v7l-7.300-1zM9.200 10.500h9.300V19l-9.300-1.300z" fill="#fff" />,
  search: (
    <g fill="none" stroke="#222" strokeWidth="1.400">
      <circle cx="11.500" cy="7.500" r="5.800" />
      <path d="M7.500 11.500L1.500 18" />
    </g>
  ),
  taskview: (
    <g fill="none" stroke="#eee" strokeWidth="1.300">
      <path d="M2.500 6h11v8h-11zM2.500 1.500v2h11v-2M2.500 18.500v-2h11v2M17.500 1.500v4M17.500 11.500v7" />
      <path d="M16.500 7.500h2v2.500h-2z" fill="#eee" />
    </g>
  ),
  weather: (
    <g fill="none" strokeLinecap="round">
      <circle cx="11" cy="9.500" r="8" fill="#f59a23" />
      <path d="M2 6.500h14M1 10.500h16M3 14.500h13" stroke="#ffd45c" strokeWidth="2.200" />
    </g>
  ),
  trayUp: <path d="M3 11l5-5 5 5" fill="none" stroke="#fff" strokeWidth="1.400" />,
  meet: (
    <g fill="none" stroke="#fff" strokeWidth="1.100">
      <rect x="3" y="5" width="7.500" height="6.500" rx="1.500" />
      <path d="M10.500 7.500L13 6v4.500l-2.500-1.500M4 2.500c2.500-1.500 6-1.500 8 0M4 14c2.500 1.500 6 1.500 8 0" />
      <path d="M6 8.200h1" />
    </g>
  ),
  battery: (
    <g fill="none" stroke="#fff" strokeWidth="1.100">
      <path d="M6 4.500h8.500v8H4V10" />
      <path d="M15.500 7v3" strokeWidth="1.600" />
      <path d="M7 7h5.500v3H7z" fill="#fff" />
      <path d="M1 4h5v2.500c0 1-1 1.500-2.500 1.500S1 7.500 1 6.500zM2.200 4V1.500M4.800 4V1.500M3.500 8v4" fill="#222" />
    </g>
  ),
  plane2: (
    <path d="M15.500 8c0 1-1 1.200-2 1.200h-3L7.500 14.500H6l1.200-5.300H4L2.500 11H1.200L2 8l-.8-3h1.300L4 6.800h3.200L6 1.500h1.500l3 5.300h3c1 0 2 .2 2 1.200z" fill="none" stroke="#fff" strokeWidth="1.100" />
  ),
  volume: (
    <g fill="none" stroke="#fff" strokeWidth="1.100">
      <path d="M1 6h2.500L7 2.500v11L3.500 10H1z" />
      <path d="M9 6c.8 1.200.8 2.800 0 4M11 4.300c1.800 2.200 1.800 5.200 0 7.400M13 2.500c2.700 3.200 2.700 7.800 0 11" />
    </g>
  ),
};

const Glyph = ({ name, size = 20, box }: { name: string; size?: number; box?: number }) => (
  <svg width={size} height={size} viewBox={`0 0 ${box ?? 20} ${box ?? 20}`} aria-hidden="true">
    {art[name]}
  </svg>
);

const Caret = ({ color = "#444", up = false }: { color?: string; up?: boolean }) => (
  <svg width="6" height="3" viewBox="0 0 6 3" aria-hidden="true">
    <path d={up ? "M0 3h6L3 0z" : "M0 0h6L3 3z"} fill={color} />
  </svg>
);

/* ------------------------------------------------------------------ */
/* Window frame and title bar                                          */
/* ------------------------------------------------------------------ */

const Window = styled.div`
  display: flex;
  flex-direction: column;
  height: 100vh;
  font-family: ${FONT};
  font-size: 11px;
  line-height: 14px;
  color: #000;
  background: #f7f7f7;
`;

const TitleBar = styled.header`
  display: flex;
  height: 35px;
  flex: none;
  border-top: 1px solid #b8b8b8;
  border-bottom: 1px solid #b8b8b8;
  background: #e6e6e6;
`;

const MenuBar = styled.nav`
  display: flex;
  align-items: center;
  width: 420px;
  flex: none;
  padding-left: 4px;
  background: #f7f7f7;
  border-right: 1px solid #b8b8b8;
`;

const Brand = styled.div`
  display: flex;
  align-items: center;
  gap: 4px;
  width: 130px;
  padding-bottom: 2px;
`;

const Wordmark = styled.span`
  padding-top: 4px;
  font: italic 400 13px/16px Lato, sans-serif;
  color: #d6232a;
  b {
    font-weight: 900;
  }
`;

const MenuItem = styled.button<{ $w: number }>`
  width: ${(p) => p.$w}px;
  flex: none;
  height: 24px;
  padding-top: 2px;
  text-align: center;
  font-size: 12px;
`;

const QuickBar = styled.div`
  display: flex;
  align-items: center;
  padding-left: 16px;
`;

const IconButton = styled.button<{ $w?: number; $h?: number; $tone?: string }>`
  display: flex;
  align-items: center;
  justify-content: center;
  width: ${(p) => p.$w ?? 30}px;
  height: ${(p) => p.$h ?? 30}px;
  flex: none;
  color: ${(p) => p.$tone ?? "#333"};
`;

const SelectTool = styled.div`
  display: flex;
  border: 1px solid #808080;
  background: #e6e6e6;
  height: 30px;
  width: 44px;
  & > button:first-child {
    background: #b0b0b0;
    border-right: 1px solid #808080;
  }
`;

const DocTitle = styled.div`
  flex: 1;
  align-self: center;
  text-align: center;
`;

const WindowTools = styled.div`
  display: flex;
  align-items: center;
  padding-right: 3px;
`;

const CommandSearch = styled.label`
  display: flex;
  align-items: center;
  width: 201px;
  height: 22px;
  margin-right: 4px;
  padding: 0 3px 0 6px;
  gap: 6px;
  background: #fff;
  border: 1px solid #c6c6c6;
  border-radius: 2px;
  color: #555;
`;

const PlainInput = styled.input`
  flex: 1;
  min-width: 0;
  border: 0;
  outline: 0;
  padding: 0;
  background: transparent;
  &::placeholder {
    color: inherit;
    opacity: 1;
  }
`;

/* ------------------------------------------------------------------ */
/* Ribbon                                                              */
/* ------------------------------------------------------------------ */

const Ribbon = styled.section`
  display: flex;
  height: 81px;
  flex: none;
  padding: 1px 0 2px;
  border-right: 1px solid #808080;
`;

const RibbonGroup = styled.div<{ $w?: number }>`
  display: flex;
  flex: none;
  width: ${(p) => (p.$w ? `${p.$w}px` : "auto")};
  border-right: 1px solid #c6c6c6;
`;

const BigTool = styled.button<{ $w: number }>`
  display: flex;
  flex-direction: column;
  align-items: center;
  width: ${(p) => p.$w}px;
  flex: none;
  padding: 4px 0 9px;
  line-height: 13px;
  span {
    margin-top: 1px;
    white-space: pre-line;
  }
  svg:last-child:not(:first-child) {
    margin-top: auto;
  }
`;

const ToolColumn = styled.div<{ $w: number }>`
  display: flex;
  flex-direction: column;
  width: ${(p) => p.$w}px;
  flex: none;
  padding-left: 3px;
`;

const ToolRow = styled.button<{ $off?: boolean }>`
  display: flex;
  align-items: center;
  gap: 6px;
  height: 26px;
  text-align: left;
  color: ${(p) => (p.$off ? "#b4b4b4" : "#000")};
`;

const RibbonEnd = styled.div`
  display: flex;
  flex: 1;
  justify-content: flex-end;
  align-items: flex-end;
  padding: 0 4px 2px 0;
`;

/* ------------------------------------------------------------------ */
/* Command tabs                                                        */
/* ------------------------------------------------------------------ */

const TabStrip = styled.nav`
  display: flex;
  height: 23px;
  flex: none;
  border-top: 1px solid #808080;
`;

const Tab = styled.button<{ $w: number; $on?: boolean }>`
  width: ${(p) => p.$w}px;
  flex: none;
  color: #222;
  background: #d3d3d3;
  border-right: 1px solid #808080;
  border-bottom: 1px solid #808080;
  ${(p) =>
    p.$on &&
    css`
      font-weight: 700;
      background: #f7f7f7;
    `}
`;

const TabStripEnd = styled.div`
  display: flex;
  flex: 1;
  align-items: flex-end;
  justify-content: space-between;
  padding-right: 3px;
  background: #fff;
`;

const ScrollMark = styled.button`
  width: 8px;
  height: 14px;
  border: 1px solid #b0b0b0;
  border-left: 0;
  display: flex;
  align-items: center;
  justify-content: center;
`;

/* ------------------------------------------------------------------ */
/* Feature manager                                                     */
/* ------------------------------------------------------------------ */

const Work = styled.main`
  display: flex;
  flex: 1;
  min-height: 0;
`;

const Side = styled.aside`
  display: flex;
  flex-direction: column;
  width: 234px;
  flex: none;
  border-right: 1px solid #808080;
  border-left: 1px solid #c6c6c6;
`;

const Grip = styled.div`
  display: flex;
  align-items: center;
  justify-content: center;
  height: 17px;
  margin: 3px 2px 4px 0;
  border-top: 1px solid #c6c6c6;
  border-bottom: 1px solid #c6c6c6;
`;

const GripDot = styled.i`
  width: 6px;
  height: 6px;
  border-radius: 50%;
  background: #d3d3d3;
  border: 1px solid #909090;
`;

const SideTabs = styled.div`
  display: flex;
  height: 26px;
  flex: none;
  margin-right: 2px;
  border-top: 1px solid #808080;
`;

const SideTab = styled.button<{ $on?: boolean; $w?: number }>`
  display: flex;
  align-items: center;
  justify-content: center;
  width: ${(p) => p.$w ?? 40}px;
  flex: none;
  overflow: hidden;
  background: ${(p) => (p.$on ? "#f7f7f7" : "#d3d3d3")};
  border-right: 1px solid #808080;
  border-bottom: 1px solid ${(p) => (p.$on ? "#f7f7f7" : "#808080")};
`;

const SideScroll = styled.button`
  flex: 1;
  align-self: flex-end;
  height: 19px;
  display: flex;
  align-items: center;
  justify-content: center;
  background: #f7f7f7;
  border: 1px solid #b0b0b0;
  border-left-color: #fff;
`;

const FilterBox = styled.label`
  display: flex;
  align-items: center;
  height: 26px;
  flex: none;
  margin: 0 5px 0 4px;
  border: 1px solid #c6c6c6;
`;

const TreeArea = styled.div`
  display: flex;
  flex: 1;
  min-height: 0;
  padding: 1px 2px 0 0;
`;

const Tree = styled.ul`
  flex: 1;
  min-width: 0;
  overflow: hidden;
`;

const Node = styled.li<{ $root?: boolean; $off?: boolean }>`
  display: flex;
  align-items: center;
  height: 22px;
  padding-left: ${(p) => (p.$root ? 3 : 9)}px;
  gap: ${(p) => (p.$root ? 3 : 4)}px;
  white-space: nowrap;
  color: ${(p) => (p.$off ? "#999" : "#000")};
`;

const Twist = styled.span`
  width: 12px;
  flex: none;
`;

const ScrollTrack = styled.div<{ $row?: boolean }>`
  display: flex;
  flex-direction: ${(p) => (p.$row ? "row" : "column")};
  flex: none;
  background: #f0f0f0;
  ${(p) =>
    p.$row
      ? css`
          height: 16px;
          width: 215px;
        `
      : css`
          width: 16px;
        `}
`;

const Thumb = styled.div<{ $flex: number }>`
  flex: ${(p) => p.$flex} 1 0;
  background: #cdcdcd;
`;

const Slack = styled.div<{ $flex: number }>`
  flex: ${(p) => p.$flex} 1 0;
`;

const SideFoot = styled.div`
  height: 3px;
  flex: none;
  margin: 3px 2px 0 0;
  border-top: 1px solid #c6c6c6;
  border-bottom: 1px solid #c6c6c6;
`;

/* ------------------------------------------------------------------ */
/* Graphics area                                                       */
/* ------------------------------------------------------------------ */

const Viewport = styled.section`
  position: relative;
  flex: 1;
  min-width: 0;
  background: #fff;
  border-top: 1px solid transparent;
`;

const Canvas = styled.svg`
  position: absolute;
  inset: 0;
  width: 100%;
  height: 100%;
`;

const ViewTools = styled.div`
  position: relative;
  display: flex;
  justify-content: center;
  padding-right: 5px;
  padding-top: 4px;
`;

const PanelHandle = styled.button`
  position: absolute;
  left: -1px;
  top: 246px;
  display: flex;
  align-items: center;
  justify-content: center;
  width: 9px;
  height: 40px;
  background: #f7f7f7;
  border: 1px solid #808080;
  border-left: 0;
`;

const TaskPane = styled.nav`
  position: absolute;
  right: 0;
  top: 28px;
  display: flex;
  flex-direction: column;
  width: 26px;
  border: 1px solid #808080;
  border-width: 1px 0 0 1px;
`;

const PaneTab = styled.button<{ $on?: boolean }>`
  display: flex;
  align-items: center;
  justify-content: center;
  height: 24px;
  background: ${(p) => (p.$on ? "#f7f7f7" : "#d3d3d3")};
  border-bottom: 1px solid #808080;
`;

/* ------------------------------------------------------------------ */
/* Model tabs and status bar                                           */
/* ------------------------------------------------------------------ */

const ModelTabs = styled.nav`
  display: flex;
  height: 16px;
  flex: none;
  border-top: 1px solid #808080;
  border-bottom: 1px solid #808080;
  background: #f7f7f7;
`;

const Pager = styled.div`
  display: flex;
  gap: 1px;
  width: 67px;
  padding: 0 1px 0 2px;
  background: #808080;
`;

const PagerButton = styled.button`
  flex: 1;
  display: flex;
  align-items: center;
  justify-content: center;
  background: #b0b4b8;
`;

const ModelTab = styled.button<{ $w: number; $on?: boolean }>`
  width: ${(p) => p.$w}px;
  flex: none;
  font-weight: ${(p) => (p.$on ? 700 : 400)};
  background: ${(p) => (p.$on ? "#f7f7f7" : "#d3d3d3")};
  border-right: 1px solid #808080;
`;

const StatusBar = styled.footer`
  display: flex;
  align-items: center;
  height: 18px;
  flex: none;
  padding: 0 2px 0 1px;
  background: #e6e6e6;
`;

const StatusCell = styled.span<{ $w?: number; $push?: boolean }>`
  display: flex;
  align-items: center;
  width: ${(p) => (p.$w ? `${p.$w}px` : "auto")};
  margin-left: ${(p) => (p.$push ? "auto" : 0)};
`;

/* ------------------------------------------------------------------ */
/* Desktop task bar                                                    */
/* ------------------------------------------------------------------ */

const TaskBar = styled.footer`
  display: flex;
  height: 40px;
  flex: none;
  background: #222120;
  color: #fff;
`;

const TaskSearch = styled.label`
  display: flex;
  align-items: center;
  width: 288px;
  padding: 0 8px 0 11px;
  gap: 10px;
  background: #f2f2f2;
  border: 1px solid #b8b8b8;
  color: #444;
  font-size: 14px;
  line-height: 20px;
`;

const TaskButton = styled.button<{ $w?: number; $live?: boolean }>`
  display: flex;
  align-items: center;
  justify-content: center;
  width: ${(p) => p.$w ?? 49}px;
  flex: none;
  ${(p) =>
    p.$live &&
    css`
      background: linear-gradient(#76b9ed, #76b9ed) center bottom / 40px 2px no-repeat;
    `}
`;

const Tray = styled.div`
  display: flex;
  align-items: center;
  margin-left: auto;
`;

const Weather = styled.button`
  display: flex;
  align-items: center;
  gap: 10px;
  width: 132px;
  font-size: 13px;
`;

const WeatherIcon = styled.span`
  position: relative;
  width: 24px;
`;

const Badge = styled.span`
  position: absolute;
  right: 0;
  top: -2px;
  width: 12px;
  height: 12px;
  border-radius: 50%;
  background: #d13438;
  font-size: 9px;
  line-height: 12px;
`;

const Clock = styled.div`
  width: 70px;
  text-align: center;
  font-size: 11px;
  line-height: 18px;
`;

const ShowDesktop = styled.button`
  width: 5px;
  height: 40px;
  border-left: 1px solid #777;
`;

/* ------------------------------------------------------------------ */
/* Content                                                             */
/* ------------------------------------------------------------------ */

const menus: [string, number][] = [
  ["File", 36],
  ["Edit", 34],
  ["View", 43],
  ["Insert", 43],
  ["Tools", 45],
  ["Window", 58],
];

const quick = ["page", "open", "save", "print", "undo", "redo"];

const tabs: [string, number][] = [
  ["Features", 60],
  ["Sketch", 56],
  ["Mesh Modeling", 99],
  ["Markup", 57],
  ["Evaluate", 60],
  ["MBD Dimensions", 107],
  ["SOLIDWORKS Add-Ins", 133],
  ["MBD", 56],
  ["SOLIDWORKS CAM", 121],
  ["SOLIDWORKS CAM TBM", 145],
  ["Analysis Preparation", 127],
  ["SOLIDWORKS Inspection", 146],
  ["Flow Simulation", 102],
];

const nodes: { icon: string; text: string; open?: boolean; off?: boolean }[] = [
  { icon: "history", text: "History", open: true },
  { icon: "sensors", text: "Sensors" },
  { icon: "annotations", text: "Annotations", open: true },
  { icon: "bodies", text: "Solid Bodies(3)", open: true },
  { icon: "material", text: "Material <not specified>" },
  { icon: "plane", text: "Front Plane" },
  { icon: "plane", text: "Top Plane" },
  { icon: "plane", text: "Right Plane" },
  { icon: "origin", text: "Origin" },
  { icon: "revolve", text: "Revolve2", open: true },
  { icon: "shell", text: "Shell1" },
  { icon: "sketch", text: "(-) Sketch11" },
  { icon: "sketch", text: "Sketch13" },
  { icon: "sketch", text: "(-) Sketch15" },
  { icon: "plane", text: "Plane4" },
  { icon: "plane", text: "Plane5" },
  { icon: "plane", text: "Plane6" },
  { icon: "filletOff", text: "Fillet5", off: true },
  { icon: "plane", text: "Plane7" },
  { icon: "wrap", text: "Wrap5", open: true },
];

const viewTools: [string, boolean][] = [
  ["zoomFit", false],
  ["zoomArea", false],
  ["prevView", false],
  ["section", false],
  ["dynamic", false],
  ["viewOrient", true],
  ["displayStyle", true],
  ["eye", true],
  ["ballEdit", false],
  ["scene", true],
  ["monitor", true],
];

const pane = ["home", "library", "folderOpen", "palette", "ball", "props", "globe"];

/* Part outline, in canvas pixels */
const CX = 460;
const CY = 303.5;
const at = (r: number, deg: number) => {
  const a = (deg * Math.PI) / 180;
  return `${(CX + r * Math.cos(a)).toFixed(2)} ${(CY + r * Math.sin(a)).toFixed(2)}`;
};
const arc = (r: number, from: number, to: number) =>
  `M${at(r, from)}A${r} ${r} 0 ${to - from > 180 ? 1 : 0} 1 ${at(r, to)}`;

/* Crescent that rises from the rim by `rise` pixels halfway along */
const crescent = (from: number, to: number, rise: number) => {
  const R = 196.5;
  const half = ((to - from) / 2) * (Math.PI / 180);
  const chord = R * Math.sin(half);
  const sag = R * (1 - Math.cos(half)) + rise;
  const outer = ((chord * chord + sag * sag) / (2 * sag)).toFixed(2);
  return `M${at(R, from)}A${outer} ${outer} 0 0 1 ${at(R, to)}A${R} ${R} 0 0 0 ${at(R, from)}z`;
};

const ridges: [number, number][] = [
  [-107, -72],
  [-56, -14],
  [-8, 32],
  [41, 82],
  [97, 131],
  [151, 188],
  [202, 237],
];
const burrs: [number, number][] = [
  [-119, -114],
  [-95, -88],
  [-82, -76],
  [-68, -59],
  [61, 66],
  [74, 87],
  [98, 104],
  [111, 119],
];

const Part = () => (
  <Canvas aria-label="Part model">
    <g fill="none" stroke="#0a0a0a" strokeWidth="2">
      <circle cx={CX} cy={CY} r="196.500" />
      <circle cx={CX} cy={CY} r="188.500" />
      <circle cx={CX} cy={CY} r="74.500" />
      <circle cx={CX} cy={CY} r="42.500" />
      {ridges.map(([a, b]) => (
        <g key={a}>
          <path d={crescent(a, b, 1.8)} fill="#0a0a0a" strokeWidth="1.500" />
          <path d={arc(197.6, a + 1, a + 10)} strokeWidth="1.500" strokeDasharray="7 1 3 1" />
          <path d={arc(197.6, b - 10, b - 1)} strokeWidth="1.500" strokeDasharray="7 1 3 1" />
        </g>
      ))}
      {burrs.map(([a, b]) => (
        <path key={a} d={arc(183.2, a, b)} strokeWidth="1" strokeDasharray="4 1 2 1" />
      ))}
    </g>
    <g fill="none" stroke="#f08000" strokeWidth="2">
      <circle cx={CX} cy={CY} r="184.500" />
      <path d={arc(74.5, 45, 56)} />
      <path d={arc(74.5, 58, 122)} />
      <path d={arc(74.5, 124, 232)} />
      <path d={arc(74.5, 238, 259)} />
    </g>
    <path d="M528 303.500h2" stroke="#555" />
    <g>
      <path d="M18 496h24" stroke="#c01818" strokeWidth="4" />
      <path d="M18 496h23" stroke="#fff" />
      <path d="M41.500 495v24" stroke="#1818a8" strokeWidth="4" />
      <path d="M41.500 497v20" stroke="#fff" />
      <path d="M11 496l9-4v8z" fill="#b01414" />
      <path d="M41.500 528l-4-10h8z" fill="#1818b8" />
      <path d="M5 491l5 9M10 491l-5 9" stroke="#ff2020" />
      <path d="M37.500 491l3 3 3-3" stroke="#208020" fill="none" />
      <path d="M38 528.500h4.500l-4.500 7h4.500" stroke="#1818ff" fill="none" />
    </g>
  </Canvas>
);

/* Task bar app logos */
const Sparkles = () => (
  <svg width="64" height="28" viewBox="0 0 64 28" aria-hidden="true">
    <path d="M25 3c1.800 6.500 4 8.500 10.500 10.500C29 15.500 26.800 17.500 25 24c-1.800-6.500-4-8.500-10.500-10.500C21 11.500 23.200 9.500 25 3z" fill="#fcc21b" stroke="#fcc21b" strokeWidth="2.500" strokeLinejoin="round" />
    <path d="M47 12.500c1 3.500 2 4.500 5 5.500-3 1-4 2-5 5.500-1-3.500-2-4.500-5-5.500 3-1 4-2 5-5.500z" fill="#fcc21b" stroke="#fbb03b" />
    <path d="M5 18c1 2.500 1.500 3 4 4-2.500 1-3 1.500-4 4-1-2.500-1.500-3-4-4 2.500-1 3-1.500 4-4z" fill="#1ea7f0" stroke="#1ea7f0" />
    <circle cx="41" cy="4" r="2" fill="#f4622a" />
    <circle cx="59" cy="24" r="2" fill="#7cc242" />
  </svg>
);

const Copilot = () => (
  <svg width="24" height="24" viewBox="0 0 24 24" aria-hidden="true">
    <defs>
      <linearGradient id="cpA" x1="0" y1="0" x2="0" y2="1">
        <stop offset="0" stopColor="#1c8cf0" />
        <stop offset=".5" stopColor="#1fb5a5" />
        <stop offset="1" stopColor="#f2d13a" />
      </linearGradient>
      <linearGradient id="cpB" x1="0" y1="0" x2="0" y2="1">
        <stop offset="0" stopColor="#b45cf0" />
        <stop offset=".5" stopColor="#f0568a" />
        <stop offset="1" stopColor="#fb9a4b" />
      </linearGradient>
    </defs>
    <path d="M8 1.500h6c1.500 0 2.500 1 3 3L18 7h-4c-1.500 0-2 .8-2.500 2.200L9.500 15c-.5 1.500-1.500 2-3 2H4c-2.500 0-3.500-1.800-3-4.500L3 5c.8-2.500 2.500-3.500 5-3.500z" fill="url(#cpA)" />
    <path d="M16 22.500h-6c-1.500 0-2.500-1-3-3L6.500 17H9c2 0 2.800-.8 3.300-2.200l2-5.800c.5-1.500 1.500-2 3-2H20c2.500 0 3.500 1.800 3 4.500L21 19c-.8 2.500-2.500 3.500-5 3.500z" fill="url(#cpB)" />
  </svg>
);

const Edge = () => (
  <svg width="24" height="24" viewBox="0 0 24 24" aria-hidden="true">
    <defs>
      <linearGradient id="edA" x1="0" y1="0" x2="1" y2=".5">
        <stop offset="0" stopColor="#2fb4ee" />
        <stop offset="1" stopColor="#62db57" />
      </linearGradient>
    </defs>
    <circle cx="12" cy="12" r="12" fill="#1268bd" />
    <path d="M.3 10.500C1.500 4 6.500 0 12 0c7 0 12 5 12 10.500 0 3.500-2.700 6-6.200 6-2.800 0-4.300-1-4.300-2 0-.8 1.500-1.500 1.500-3.500 0-2.300-2-4.800-6-4.800-4 0-7.200 1.800-8.700 4.300z" fill="url(#edA)" />
    <path d="M9 7.500C6 9 6 14 8 17.500c2 3.300 6 5 10 4.500-6 4-15 1.800-17.500-6C-.5 10.500 4 6.500 9 7.500z" fill="#1b8fe0" />
    <path d="M13.300 14.500c0 1.500 3 3 8.500 1.500-1.500 3-5 4-8 3.500s-5-3-4.500-6S12 9.500 14.500 10c.5 2-1.200 3-1.200 4.500z" fill="#0d4f9c" />
  </svg>
);

const Explorer = () => (
  <svg width="24" height="24" viewBox="0 0 24 24" aria-hidden="true">
    <path d="M1 3h8l2 2.500h12V21H1z" fill="#e8a317" />
    <path d="M1 6.500h22V21H1z" fill="#ffd76a" />
    <path d="M5 21v-7.500c0-1 .8-1.500 1.500-1.500h11c.8 0 1.500.5 1.500 1.500V21h-4v-4.500H9V21z" fill="#3d94d8" />
  </svg>
);

const Calculator = () => (
  <svg width="24" height="24" viewBox="0 0 24 24" aria-hidden="true">
    <rect x="3" width="18" height="24" rx="1" fill="#6f7a85" />
    <path d="M5 2h14v4.500H5z" fill="#4cc9f0" />
    <path d="M5 8.500h4v3.700H5zM10 8.500h4v3.700h-4zM15 8.500h4v3.700h-4zM5 13.200h4v3.700H5zM10 13.200h4v3.700h-4zM5 18h4v4H5zM10 18h4v4h-4z" fill="#e8e8e8" />
    <path d="M15 13.200h4V22h-4z" fill="#1b4e8c" />
  </svg>
);

const Chrome = () => (
  <svg width="24" height="24" viewBox="0 0 24 24" aria-hidden="true">
    <circle cx="12" cy="12" r="12" fill="#fbc116" />
    <path d="M12 12L1.600 6A12 12 0 0 1 22.400 6H12z" fill="#e33b2e" />
    <path d="M12 12L1.600 6A12 12 0 0 0 12 24l5.200-9z" fill="#2da94f" />
    <path d="M12 6.500h10.700L22.400 6H12L6 9z" fill="#e33b2e" />
    <circle cx="12" cy="12" r="5.600" fill="#fff" />
    <circle cx="12" cy="12" r="4.400" fill="#3b7ded" />
  </svg>
);

const Snip = () => (
  <svg width="24" height="24" viewBox="0 0 24 24" aria-hidden="true">
    <ellipse cx="11" cy="11.500" rx="10.500" ry="6" transform="rotate(-18 11 11.500)" fill="#8f8f8f" />
    <ellipse cx="12" cy="8.500" rx="10.500" ry="6" transform="rotate(-18 12 8.500)" fill="#fff" stroke="#d8434a" strokeWidth="1.800" />
    <path d="M9 5l7 10M17 4l-3 11" stroke="#888" strokeWidth="1.200" />
    <g fill="none" stroke="#2f8fd0" strokeWidth="1.800">
      <circle cx="15" cy="20" r="2.400" />
      <circle cx="20.500" cy="17" r="2.400" />
    </g>
  </svg>
);

const YouTube = () => (
  <svg width="24" height="24" viewBox="0 0 24 24" aria-hidden="true">
    <rect y="3.500" width="24" height="17" rx="4" fill="#f00" />
    <path d="M9.500 8.500l6.500 3.500-6.500 3.500z" fill="#fff" />
  </svg>
);

const SolidApp = ({ tag }: { tag: "Rx" | "2022" }) => (
  <svg width="26" height="26" viewBox="0 0 26 26" aria-hidden="true">
    <path d="M2 4.500L13 1l10.500 3-11 4z" fill="#e8453e" />
    <path d="M2 4.500l10.500 3.500V23L2 18z" fill="#c01a20" />
    <path d="M12.500 8L23.500 4v13l-11 6z" fill="#9a1218" />
    <g fill="#fff" fontFamily="Open Sans" fontWeight="800">
      <text x="3.500" y="16" fontSize="12">S</text>
      <text x="12.500" y="15" fontSize="9">W</text>
      {tag === "2022" ? (
        <text x="4.500" y="25" fontSize="8" stroke="#111" strokeWidth="2" paintOrder="stroke">2022</text>
      ) : null}
    </g>
    {tag === "Rx" ? (
      <g>
        <path d="M14.500 15h9.500v10.500h-9.500z" fill="#fff" />
        <path d="M16.200 23v-6h2.300c2 0 2 3 0 3h-2.300M18.400 20l4 4.500M22.400 20.500l-3.600 4" fill="none" stroke="#111" strokeWidth="1.200" />
      </g>
    ) : null}
  </svg>
);

const Notes = () => (
  <svg width="28" height="28" viewBox="0 0 28 28" aria-hidden="true">
    <path d="M2 3h16v12.500H10L6 19v-3.500H2z" fill="#fff" />
    <path d="M4.500 6.500h11M4.500 9.500h11M4.500 12.500h6" stroke="#222" strokeWidth="1.300" />
    <circle cx="17" cy="20" r="7.300" fill="#333" stroke="#999" />
    <text x="17" y="24" textAnchor="middle" fontFamily="Open Sans" fontSize="11" fill="#fff">3</text>
  </svg>
);

const MENU_GREY = "#9a9a9a";

export default function App() {
  return (
    <Window>
      <GlobalStyle />

      <TitleBar>
        <MenuBar>
          <Brand>
            <Glyph name="ds" size={22} />
            <Wordmark>
              <b>SOLID</b>WORKS
            </Wordmark>
          </Brand>
          {menus.map(([text, w]) => (
            <MenuItem key={text} $w={w}>{text}</MenuItem>
          ))}
          <IconButton $w={26} aria-label="Pin menu"><Glyph name="pin" size={14} box={15} /></IconButton>
        </MenuBar>
        <QuickBar>
          <IconButton aria-label="Home"><Glyph name="home" /></IconButton>
          {quick.map((name) => (
            <React.Fragment key={name}>
              <IconButton aria-label={name}><Glyph name={name} /></IconButton>
              <IconButton $w={14} aria-label={`${name} options`}>
                <Caret color={name.endsWith("do") ? "#aaa" : "#444"} />
              </IconButton>
            </React.Fragment>
          ))}
          <SelectTool>
            <IconButton $h={28} aria-label="Select"><Glyph name="cursor" /></IconButton>
            <IconButton $w={12} $h={28} aria-label="Select options"><Caret /></IconButton>
          </SelectTool>
          <IconButton aria-label="Rebuild"><Glyph name="traffic" /></IconButton>
          <IconButton aria-label="File properties"><Glyph name="list" /></IconButton>
          <IconButton aria-label="Options"><Glyph name="gear" size={17} /></IconButton>
          <IconButton $w={13} aria-label="More options"><Caret /></IconButton>
        </QuickBar>
        <DocTitle>Part1</DocTitle>
        <WindowTools>
          <CommandSearch>
            <Glyph name="prompt" size={14} box={14} />
            <PlainInput placeholder="Search Commands" aria-label="Search Commands" />
            <Glyph name="lens" size={14} box={14} />
            <Caret color="#888" />
          </CommandSearch>
          <IconButton $w={36} aria-label="Account"><Glyph name="user" /></IconButton>
          <IconButton $w={36} aria-label="Help"><Glyph name="help" /></IconButton>
          <IconButton $w={36} aria-label="Minimize"><Glyph name="min" size={16} box={16} /></IconButton>
          <IconButton $w={36} aria-label="Restore"><Glyph name="restore" size={16} box={16} /></IconButton>
          <IconButton $w={36} aria-label="Close"><Glyph name="close" size={16} box={16} /></IconButton>
        </WindowTools>
      </TitleBar>

      <Ribbon>
        <RibbonGroup $w={69}>
          <BigTool $w={72}>
            <Glyph name="refgeo" />
            <span>{"Reference\nGeometry"}</span>
            <Caret />
          </BigTool>
        </RibbonGroup>
        <RibbonGroup $w={53}>
          <BigTool $w={52}>
            <Glyph name="simplify" />
            <span>Simplify</span>
          </BigTool>
        </RibbonGroup>
        <RibbonGroup $w={260}>
          <ToolColumn $w={136}>
            <ToolRow><Glyph name="extrude" />Extruded Boss/Base</ToolRow>
            <ToolRow><Glyph name="revolve" />Revolved Boss/Base</ToolRow>
            <ToolRow><Glyph name="cut" />Extruded Cut</ToolRow>
          </ToolColumn>
          <BigTool $w={38}>
            <Glyph name="fillet" />
            <span>Fillet</span>
            <Caret />
          </BigTool>
          <ToolColumn $w={84}>
            <ToolRow $off><Glyph name="cavity" />Cavity</ToolRow>
            <ToolRow><Glyph name="mirror" />Mirror</ToolRow>
            <ToolRow><Glyph name="splitLine" />Split Line</ToolRow>
          </ToolColumn>
        </RibbonGroup>
        <RibbonGroup $w={128}>
          <BigTool $w={74}>
            <Glyph name="midSurface" />
            <span>Mid-Surface</span>
          </BigTool>
          <BigTool $w={50}>
            <Glyph name="surfaces" />
            <span>Surfaces</span>
            <Caret />
          </BigTool>
        </RibbonGroup>
        <RibbonGroup $w={220}>
          <ToolColumn $w={84}>
            <ToolRow><Glyph name="split" />Split</ToolRow>
            <ToolRow><Glyph name="combine" />Combine</ToolRow>
            <ToolRow><Glyph name="intersect" />Intersect</ToolRow>
          </ToolColumn>
          <ToolColumn $w={134}>
            <ToolRow><Glyph name="moveCopy" />Move/Copy Bodies</ToolRow>
            <ToolRow><Glyph name="deleteBody" />Delete/Keep Body</ToolRow>
          </ToolColumn>
        </RibbonGroup>
        <RibbonGroup $w={141}>
          <ToolColumn $w={140}>
            <ToolRow $off><Glyph name="recognize" />Recognize Features</ToolRow>
            <ToolRow><Glyph name="heal" />Heal Edges</ToolRow>
            <ToolRow><Glyph name="moveFace" />Move Face</ToolRow>
          </ToolColumn>
        </RibbonGroup>
        <BigTool $w={62}>
          <Glyph name="instant" />
          <span>Instant3D</span>
        </BigTool>
        <RibbonEnd>
          <IconButton $w={18} $h={18} aria-label="Collapse ribbon"><Glyph name="chevronUp" size={16} box={16} /></IconButton>
        </RibbonEnd>
      </Ribbon>

      <TabStrip>
        {tabs.map(([text, w]) => (
          <Tab key={text} $w={w} $on={text === "Analysis Preparation"}>{text}</Tab>
        ))}
        <TabStripEnd>
          <ScrollMark aria-label="Scroll tabs">
            <svg width="4" height="6" viewBox="0 0 4 6"><path d="M0 0v6l4-3z" fill="#888" /></svg>
          </ScrollMark>
          <WindowTools>
            <IconButton $w={26} $h={12} $tone={MENU_GREY} aria-label="Minimize document"><Glyph name="min" size={16} box={16} /></IconButton>
            <IconButton $w={26} $h={12} $tone={MENU_GREY} aria-label="Restore document"><Glyph name="restore" size={16} box={16} /></IconButton>
            <IconButton $w={26} $h={12} $tone={MENU_GREY} aria-label="Close document"><Glyph name="close" size={16} box={16} /></IconButton>
          </WindowTools>
        </TabStripEnd>
      </TabStrip>

      <Work>
        <Side>
          <Grip><GripDot /></Grip>
          <SideTabs>
            <SideTab $on $w={41} aria-label="Feature manager"><Glyph name="part" /></SideTab>
            <SideTab aria-label="Property manager"><Glyph name="tree" /></SideTab>
            <SideTab aria-label="Configuration manager"><Glyph name="target" /></SideTab>
            <SideTab aria-label="Display manager"><Glyph name="appearance" /></SideTab>
            <SideTab $w={33} aria-label="CAM manager"><Glyph name="camBox" /></SideTab>
            <SideScroll aria-label="Previous tabs">
              <svg width="4" height="6" viewBox="0 0 4 6"><path d="M4 0v6L0 3z" fill="#000" /></svg>
            </SideScroll>
            <SideScroll aria-label="Next tabs">
              <svg width="4" height="6" viewBox="0 0 4 6"><path d="M0 0v6l4-3z" fill="#000" /></svg>
            </SideScroll>
          </SideTabs>
          <FilterBox>
            <Glyph name="filter" />
            <PlainInput aria-label="Filter tree" />
          </FilterBox>
          <TreeArea>
            <Tree>
              <Node $root>
                <Glyph name="part" />
                Part1 (Default) &lt;&lt;Default&gt;_Display
              </Node>
              {nodes.map((n) => (
                <Node key={n.text} $off={n.off}>
                  <Twist>
                    {n.open ? (
                      <svg width="5" height="8" viewBox="0 0 5 8"><path d="M0 0v8l5-4z" fill="#666" /></svg>
                    ) : null}
                  </Twist>
                  <Glyph name={n.icon} />
                  {n.text}
                </Node>
              ))}
            </Tree>
            <ScrollTrack>
              <IconButton $w={16} $h={16} $tone="#505050" aria-label="Scroll up"><Glyph name="chevronUp" size={16} box={16} /></IconButton>
              <Thumb $flex={222} />
              <Slack $flex={201} />
              <IconButton $w={16} $h={16} $tone="#505050" aria-label="Scroll down"><Glyph name="chevronDown" size={16} box={16} /></IconButton>
            </ScrollTrack>
          </TreeArea>
          <ScrollTrack $row>
            <IconButton $w={16} $h={16} $tone="#505050" aria-label="Scroll left"><Glyph name="chevronLeft" size={16} box={16} /></IconButton>
            <Thumb $flex={148} />
            <Slack $flex={33} />
            <IconButton $w={16} $h={16} $tone="#505050" aria-label="Scroll right"><Glyph name="chevronRight" size={16} box={16} /></IconButton>
          </ScrollTrack>
          <SideFoot />
        </Side>

        <Viewport>
          <Part />
          <ViewTools>
            {viewTools.map(([name, menu]) => (
              <React.Fragment key={name}>
                <IconButton $w={26} $h={20} aria-label={name}><Glyph name={name} /></IconButton>
                {menu ? <IconButton $w={14} $h={20} aria-label={`${name} menu`}><Caret color="#aaa" /></IconButton> : null}
              </React.Fragment>
            ))}
          </ViewTools>
          <PanelHandle aria-label="Collapse panel"><GripDot /></PanelHandle>
          <TaskPane>
            {pane.map((name, i) => (
              <PaneTab key={name} $on={i === 0} aria-label={name}><Glyph name={name} /></PaneTab>
            ))}
          </TaskPane>
        </Viewport>
      </Work>

      <ModelTabs>
        <Pager>
          {["M8 0v8L3 4zM1.500 0v8", "M7 0v8L2 4z", "M2 0v8l5-4z", "M1 0v8l5-4zM7.500 0v8"].map((d) => (
            <PagerButton key={d} aria-label="Page tabs">
              <svg width="9" height="8" viewBox="0 0 9 8"><path d={d} fill="#888" stroke="#888" /></svg>
            </PagerButton>
          ))}
        </Pager>
        <ModelTab $w={57} $on>Model</ModelTab>
        <ModelTab $w={68}>3D Views</ModelTab>
        <ModelTab $w={108}>Motion Study 1</ModelTab>
      </ModelTabs>

      <StatusBar>
        <StatusCell>SOLIDWORKS Premium 2022 SP1.0</StatusCell>
        <StatusCell $push $w={89}>Editing Part</StatusCell>
        <StatusCell $w={90}><Glyph name="rebuild" size={16} /></StatusCell>
        <StatusCell $w={54}>MMGS</StatusCell>
        <StatusCell $w={32}><Caret up /></StatusCell>
        <StatusCell><Glyph name="tags" size={18} /></StatusCell>
      </StatusBar>

      <TaskBar>
        <TaskButton $w={48} aria-label="Start"><Glyph name="windows" size={18} /></TaskButton>
        <TaskSearch>
          <Glyph name="search" size={18} />
          <PlainInput placeholder="Type here to search" aria-label="Type here to search" />
          <Sparkles />
        </TaskSearch>
        <TaskButton $w={50} aria-label="Task view"><Glyph name="taskview" size={18} /></TaskButton>
        <TaskButton aria-label="Copilot"><Copilot /></TaskButton>
        <TaskButton aria-label="Edge"><Edge /></TaskButton>
        <TaskButton aria-label="File Explorer"><Explorer /></TaskButton>
        <TaskButton aria-label="Calculator"><Calculator /></TaskButton>
        <TaskButton aria-label="Chrome"><Chrome /></TaskButton>
        <TaskButton aria-label="Snipping tool"><Snip /></TaskButton>
        <TaskButton aria-label="YouTube"><YouTube /></TaskButton>
        <TaskButton $live aria-label="SOLIDWORKS Rx"><SolidApp tag="Rx" /></TaskButton>
        <TaskButton $live aria-label="SOLIDWORKS 2022"><SolidApp tag="2022" /></TaskButton>
        <Tray>
          <Weather>
            <WeatherIcon>
              <Glyph name="weather" size={22} />
              <Badge>1</Badge>
            </WeatherIcon>
            <span>27°C</span>
            <span>Smoke</span>
          </Weather>
          {["trayUp", "meet", "battery", "plane2", "volume"].map((name) => (
            <TaskButton key={name} $w={24} aria-label={name}><Glyph name={name} size={18} box={16} /></TaskButton>
          ))}
          <Clock>
            2:19 PM
            <br />
            17/02/2025
          </Clock>
          <TaskButton $w={48} aria-label="Notifications"><Notes /></TaskButton>
          <ShowDesktop aria-label="Show desktop" />
        </Tray>
      </TaskBar>
    </Window>
  );
}
